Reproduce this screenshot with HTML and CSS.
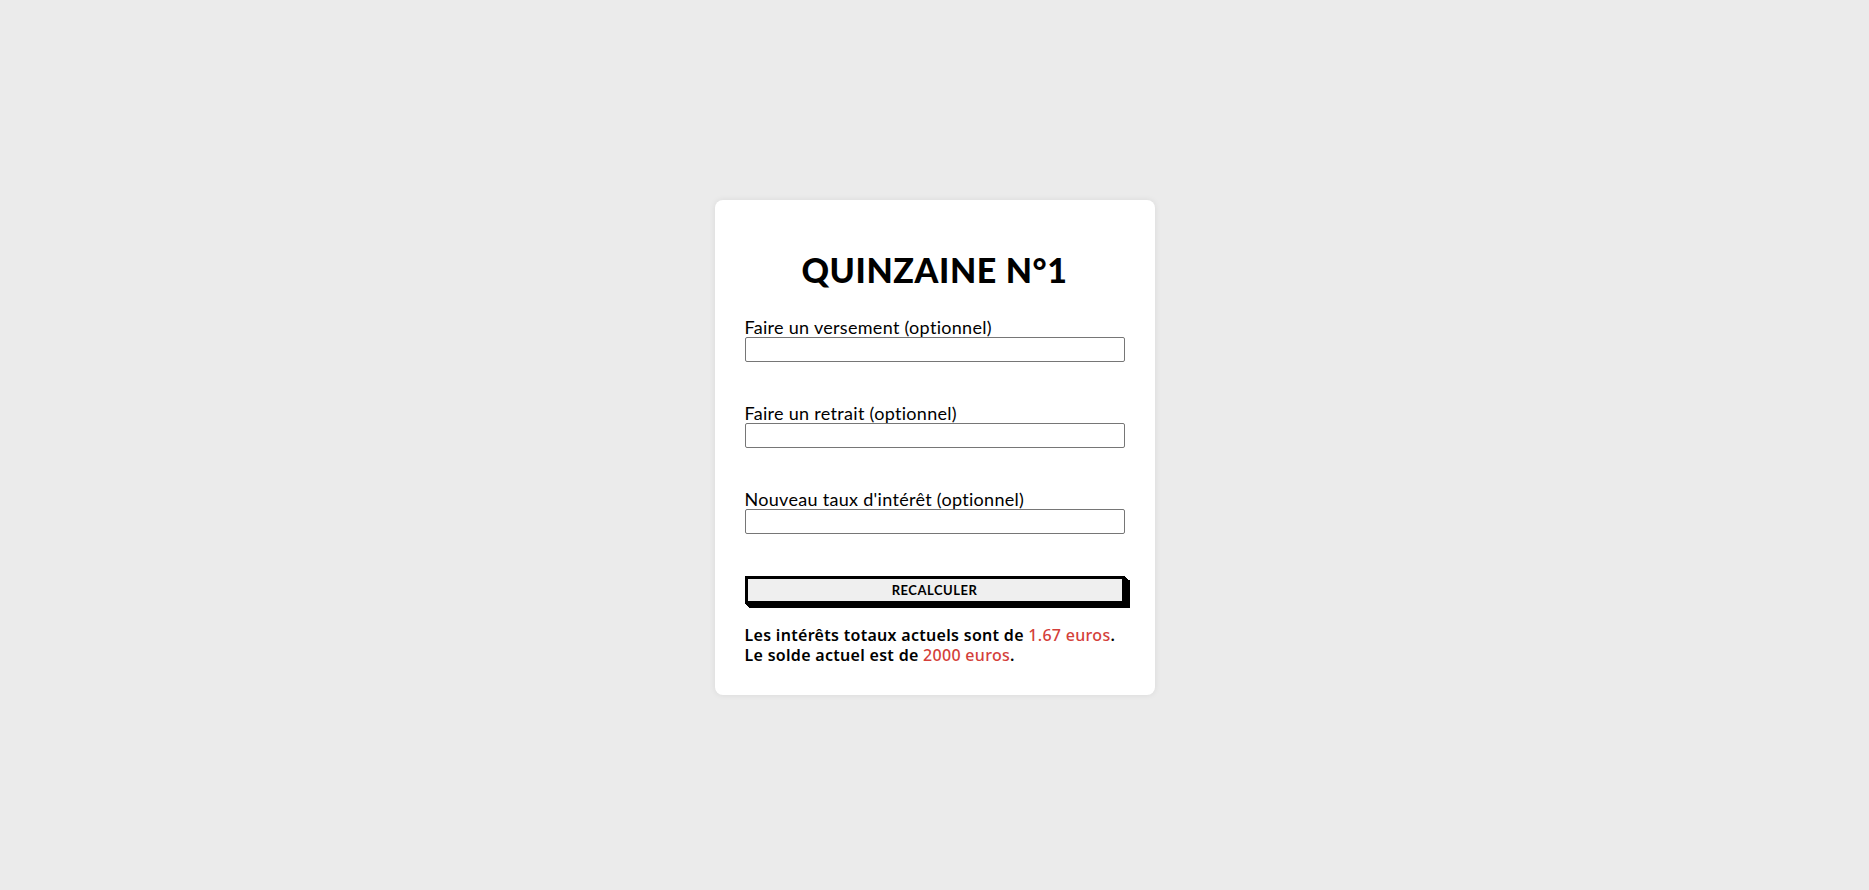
FILE: index.html
```html
<!DOCTYPE html>
<html lang="fr">
<head>
  <meta charset="UTF-8" />
  <meta name="viewport" content="width=device-width, initial-scale=1" />
  <title>Quinzaine</title>
  <link rel="stylesheet" href="styles.css">
</head>
<body>
  <div class="card">
    <h1>QUINZAINE N°1</h1>

    <div class="field">
      <label for="versement">Faire un versement (optionnel)</label>
      <input type="text" id="versement" />
    </div>

    <div class="field">
      <label for="retrait">Faire un retrait (optionnel)</label>
      <input type="text" id="retrait" />
    </div>

    <div class="field">
      <label for="taux">Nouveau taux d'intérêt (optionnel)</label>
      <input type="text" id="taux" />
    </div>

    <button class="recalc">RECALCULER</button>

    <p class="result">
      Les intérêts totaux actuels sont de <span class="amount">1.67 euros</span>.<br />
      Le solde actuel est de <span class="amount">2000 euros</span>.
    </p>
  </div>
</body>
</html>
```

FILE: styles.css
```css
body {
  margin: 0;
  min-height: 100vh;
  background: #ebebeb;
  font-family: "Lato", "Noto Sans", sans-serif;
  color: #000;
  display: flex;
  justify-content: center;
  align-items: flex-start;
}
.card {
  margin-top: 200px;
  width: 380px;
  padding: 30px 30px 30px;
  background: #fff;
  border-radius: 8px;
  box-shadow: 0 0 6px rgba(0, 0, 0, 0.08);
}
h1 {
  margin: 20px 0 27px;
  text-align: center;
  font-family: "Lato", sans-serif;
  font-weight: 900;
  font-size: 34px;
  letter-spacing: 0.6px;
  line-height: 40px;
}
.field {
  margin-bottom: 41px;
}
.field label {
  display: block;
  font-size: 18px;
  letter-spacing: 0.3px;
  line-height: 20px;
}
.field input {
  display: block;
  box-sizing: border-box;
  width: 100%;
  height: 25px;
  margin: 0;
  border: 1px solid #767676;
  border-radius: 2px;
}
.recalc {
  display: block;
  box-sizing: border-box;
  width: 100%;
  height: 28px;
  margin: 42px 0 0;
  background: #efefef;
  border: 3px solid #000;
  font-family: "Lato", sans-serif;
  font-weight: 700;
  font-size: 13px;
  letter-spacing: 0.5px;
  cursor: pointer;
  box-shadow: 1px 1px 0 #000, 2px 2px 0 #000, 3px 3px 0 #000, 4px 4px 0 #000, 5px 4px 0 #000;
}
.result {
  margin: 21px 0 0;
  font-family: "Noto Sans", sans-serif;
  font-size: 16px;
  font-weight: 600;
  letter-spacing: 0.3px;
  line-height: 20px;
}
.amount {
  color: #d43f3a;
  font-weight: 500;
}
```
